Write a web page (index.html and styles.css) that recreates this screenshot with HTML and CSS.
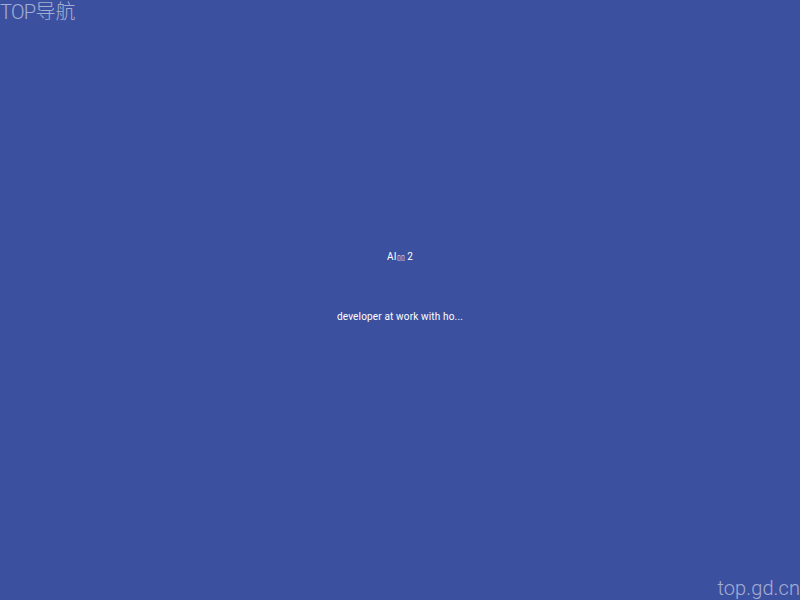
FILE: index.html
```html
<!DOCTYPE html>
<html lang="zh">
<head>
<meta charset="utf-8">
<title>AI 2</title>
<link rel="stylesheet" href="styles.css">
</head>
<body>
<div class="mark mark-top"><span class="latin-tight">TOP</span>导航</div>
<main class="center">
<div class="title">AI<span class="tofu">▯▯</span> 2</div>
<div class="desc">developer at work with ho...</div>
</main>
<div class="mark mark-bottom">top.gd.cn</div>
</body>
</html>
```
FILE: styles.css
```css
* { box-sizing: border-box; }
html, body { margin: 0; height: 100%; }
body {
  background: #3c50a0;
  font-family: Roboto, "Noto Sans CJK SC", sans-serif;
  overflow: hidden;
  position: relative;
}
.center {
  height: 600px;
  padding-top: 248px;
  display: flex;
  flex-direction: column;
  align-items: center;
  gap: 44px;
  color: #fff;
  font-size: 10px;
  line-height: 16px;
}
.title { letter-spacing: 0.2px; padding-top: 1px; margin-bottom: -1px; }
.desc { letter-spacing: 0.16px; }
.tofu { font-size: 7px; letter-spacing: 0; }
.latin-tight { letter-spacing: -0.7px; }
.mark {
  position: absolute;
  font-size: 20px;
  font-weight: 300;
  line-height: 24px;
  color: rgba(255, 255, 255, 0.55);
}
.mark-top { left: 0; top: 0; }
.mark-bottom { right: 0; bottom: 0; letter-spacing: 0.1px; }
```
